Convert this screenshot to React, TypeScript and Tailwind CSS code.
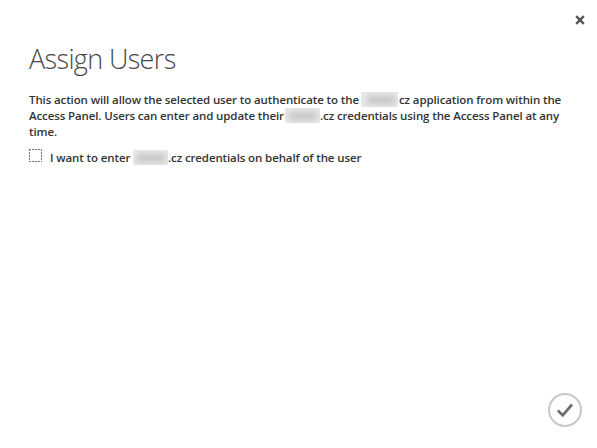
import React from "react";

function Redacted({ className = "" }: { className?: string }) {
  return (
    <span className={`flex h-[15px] shrink-0 items-end justify-end overflow-hidden bg-[#e9e9e9] pr-[3px] pb-[3px] ${className}`}>
      <span className="h-[8px] w-[28px] bg-[#c4c4c4] blur-[3px]" />
    </span>
  );
}

export default function App() {
  return (
    <main className="flex h-[448px] w-[597px] flex-col overflow-hidden bg-white font-['Open_Sans','Noto_Sans',sans-serif] text-[#333333]">
      <header className="flex h-[38px] justify-end pt-[15px] pr-[12px]">
        <button aria-label="Close" className="h-[10px] w-[10px]">
          <svg viewBox="0 0 10 10" className="block h-[10px] w-[10px]" fill="none" stroke="#555555" strokeWidth="2.5">
            <path d="M1.2 1.2 8.8 8.8M8.8 1.2 1.2 8.8" />
          </svg>
        </button>
      </header>
      <section className="flex grow flex-col pl-[29px]">
        <h1 className="h-[54px] text-[27px] leading-[41px] font-light tracking-[-0.65px] whitespace-nowrap text-[#484848]">Assign Users</h1>
        <div className="text-[11.5px] leading-4 font-semibold tracking-[-0.115px] whitespace-nowrap">
          <div className="flex h-4">
            <span className="w-[332px]">This action will allow the selected user to authenticate to the</span>
            <Redacted className="w-[37px]" />
            <span className="pl-px">cz application from within the</span>
          </div>
          <div className="flex h-4">
            <span className="w-[256px]">Access Panel. Users can enter and update their</span>
            <Redacted className="w-[35px]" />
            <span>.cz credentials using the Access Panel at any</span>
          </div>
          <div className="h-4">time.</div>
          <label className="mt-[9px] flex h-[18px] items-start">
            <input type="checkbox" className="sr-only" />
            <svg viewBox="0 0 13 13" className="mr-[8px] h-[13px] w-[13px] shrink-0" fill="none" stroke="#777777">
              <path d="M0 .5H13M0 12.5H13M.5 0V13M12.5 0V13" strokeDasharray="2 1" />
            </svg>
            <span className="flex pt-px">
              <span className="w-[83px]">I want to enter</span>
              <Redacted className="w-[35px]" />
              <span>.cz credentials on behalf of the user</span>
            </span>
          </label>
        </div>
      </section>
      <footer className="flex h-[55px] justify-end pr-[15px]">
        <button aria-label="Confirm" className="h-[34px] w-[34px]">
          <svg viewBox="0 0 34 34" className="block h-[34px] w-[34px]" fill="none">
            <circle cx="17" cy="17" r="16" stroke="#c8c8c8" strokeWidth="2" />
            <path d="M9.8 17.5 14.8 22.3 24 11.5" stroke="#6e6e6e" strokeWidth="2.8" />
          </svg>
        </button>
      </footer>
    </main>
  );
}
